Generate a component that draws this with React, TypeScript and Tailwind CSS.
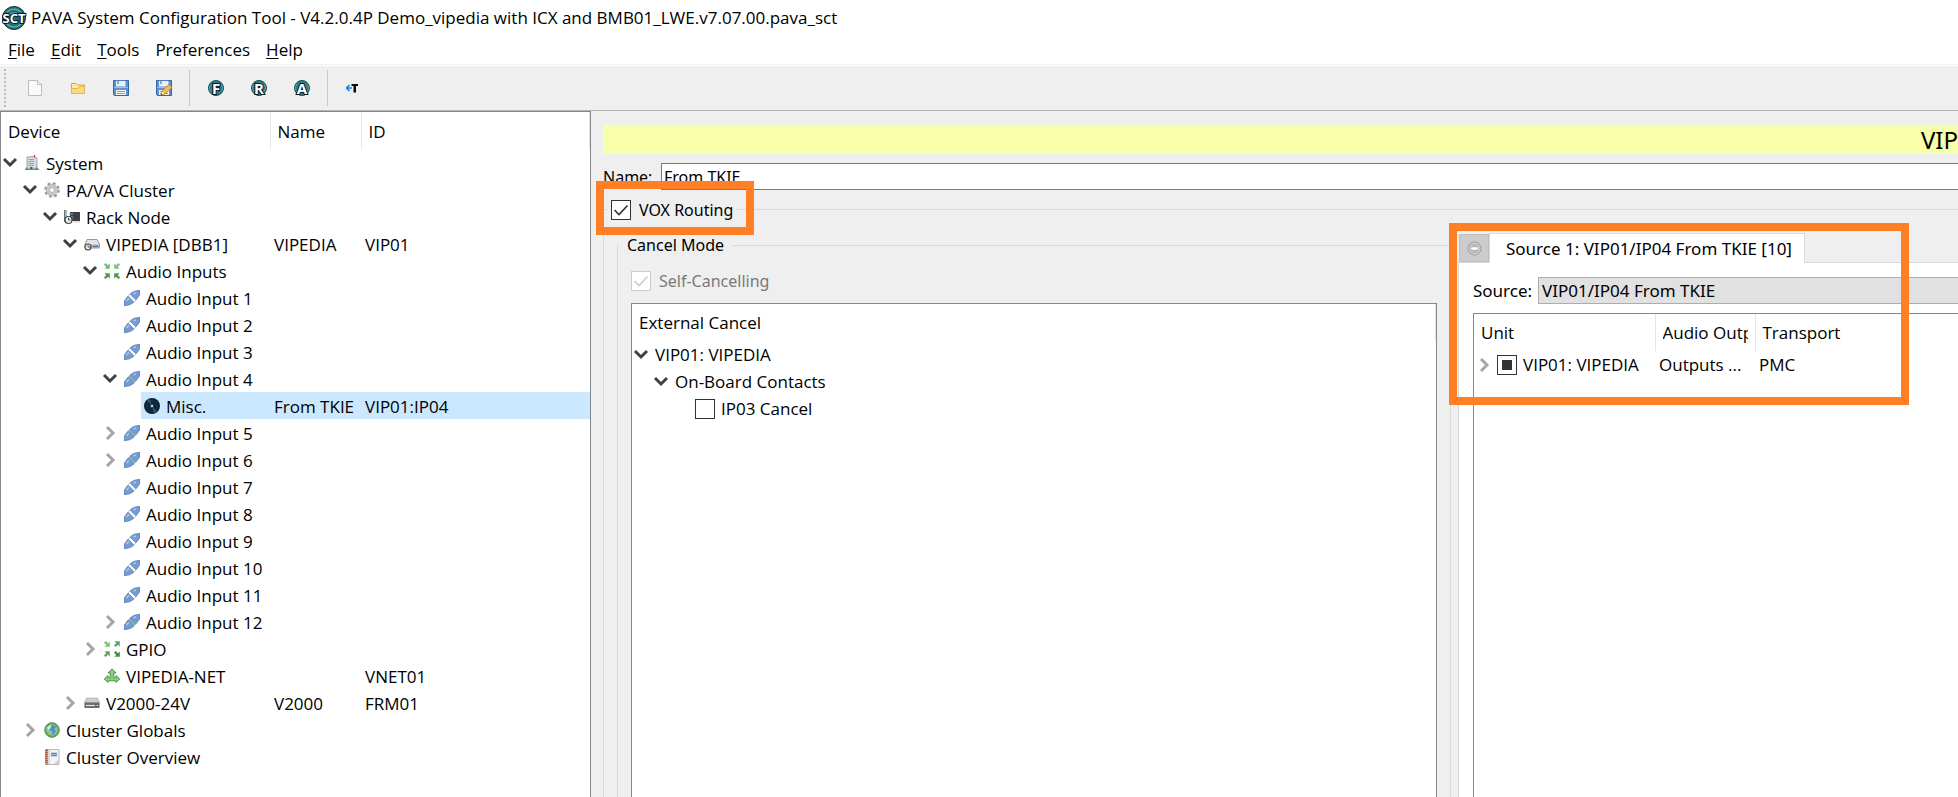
import React, { useState } from 'react';
import clsx from 'clsx';

type IconName =
    | 'building' | 'gear' | 'rack' | 'device' | 'inputs' | 'plug' | 'plugLinked'
    | 'disc' | 'gpio' | 'net' | 'unit' | 'globe' | 'notebook';

interface TreeRow {
    label: string;
    level: number;
    icon: IconName;
    open?: boolean;
    name?: string;
    id?: string;
}

const rows: TreeRow[] = [
    { label: 'System', level: 0, icon: 'building', open: true },
    { label: 'PA/VA Cluster', level: 1, icon: 'gear', open: true },
    { label: 'Rack Node', level: 2, icon: 'rack', open: true },
    { label: 'VIPEDIA [DBB1]', level: 3, icon: 'device', open: true, name: 'VIPEDIA', id: 'VIP01' },
    { label: 'Audio Inputs', level: 4, icon: 'inputs', open: true },
    { label: 'Audio Input 1', level: 5, icon: 'plug' },
    { label: 'Audio Input 2', level: 5, icon: 'plug' },
    { label: 'Audio Input 3', level: 5, icon: 'plug' },
    { label: 'Audio Input 4', level: 5, icon: 'plugLinked', open: true },
    { label: 'Misc.', level: 6, icon: 'disc', name: 'From TKIE', id: 'VIP01:IP04' },
    { label: 'Audio Input 5', level: 5, icon: 'plugLinked', open: false },
    { label: 'Audio Input 6', level: 5, icon: 'plugLinked', open: false },
    { label: 'Audio Input 7', level: 5, icon: 'plug' },
    { label: 'Audio Input 8', level: 5, icon: 'plug' },
    { label: 'Audio Input 9', level: 5, icon: 'plug' },
    { label: 'Audio Input 10', level: 5, icon: 'plug' },
    { label: 'Audio Input 11', level: 5, icon: 'plug' },
    { label: 'Audio Input 12', level: 5, icon: 'plugLinked', open: false },
    { label: 'GPIO', level: 4, icon: 'gpio', open: false },
    { label: 'VIPEDIA-NET', level: 4, icon: 'net', id: 'VNET01' },
    { label: 'V2000-24V', level: 3, icon: 'unit', open: false, name: 'V2000', id: 'FRM01' },
    { label: 'Cluster Globals', level: 1, icon: 'globe', open: false },
    { label: 'Cluster Overview', level: 1, icon: 'notebook' },
];

const menus = ['File', 'Edit', 'Tools', 'Preferences', 'Help'];

const SmallArrow: React.FC<{ x: number; y: number; rotate: number; color: string }> = ({ x, y, rotate, color }) => (
    <g transform={`translate(${x} ${y}) rotate(${rotate})`}>
        <path d="M-3 -1.500L-1.500 -3L1 -.8L2.800 -2.600V2.800H-2.600L-.8 1Z" fill={color} />
    </g>
);

const plugShape = (linked: boolean) => (
    <>
        <path d="M0 15.800L.6 10.500C1.800 9.800 2.200 7.500 4.500 5.800L10.300 11.500C8.500 13.800 6.500 14.200 5.500 14.800Z" fill="#739bd6" stroke="#4a70a8" strokeWidth=".7" />
        <path d="M16 .2L15.400 5.500C14.200 6.200 13.800 8.500 11.500 10.200L5.700 4.500C7.500 2.200 9.500 1.800 10.500 1.200Z" fill="#739bd6" stroke="#4a70a8" strokeWidth=".7" />
        <path d="M2.500 11L4.800 8.500M9.500 4L12 2.800" stroke="#b4cdf0" strokeWidth="1.300" />
        <path d="M5.200 5.200L10.800 10.800" stroke={linked ? '#7dbb7a' : '#ffffff'} strokeWidth={linked ? 1.2 : 2.2} />
        {!linked && <path d="M5 7L9 11" stroke="#a59e98" strokeWidth="1" />}
    </>
);

const icons: Record<IconName, React.ReactNode> = {
    building: (
        <>
            <path d="M3 2L10 1.500L13 3V14H3Z" fill="#d7dbe2" stroke="#8d939c" strokeWidth=".8" />
            <path d="M4.500 4.500H10M4.500 6.500H10M4.500 8.500H10M4.500 10.500H10" stroke="#7ea6d8" />
            <path d="M6 12H8.500V14.500H6Z" fill="#555b63" />
            <path d="M10.500 0V2.500" stroke="#d33" strokeWidth="1.200" />
            <path d="M1 14.500C2 11.500 4 12 4.500 14.500ZM10.500 14.500C11 11.500 14 12 15 14.500Z" fill="#4da64a" />
            <path d="M1 14.500H15" stroke="#5b9a58" />
        </>
    ),
    gear: (
        <>
            <circle cx="8" cy="8" r="6.500" fill="none" stroke="#9a9a9a" strokeWidth="2.600" strokeDasharray="2.700 2.400" />
            <circle cx="8" cy="8" r="4.300" fill="none" stroke="#c9c9c9" strokeWidth="3.400" />
            <circle cx="8" cy="8" r="5.700" fill="none" stroke="#a6a6a6" strokeWidth=".6" />
            <circle cx="8" cy="8" r="2.500" fill="#fff" stroke="#a0a0a0" strokeWidth=".8" />
        </>
    ),
    rack: (
        <>
            <path d="M0 1H3V13H0Z" fill="#a9b8c0" />
            <path d="M.5 1V13" stroke="#5c7480" />
            <path d="M6 3H16V12H6Z" fill="#3c4146" />
            <path d="M5 5H9M5 8H9M5 10H9" stroke="#8aa0ac" />
            <path d="M10 13H16" stroke="#c8c8c8" />
            <circle cx="4.500" cy="11" r="3.500" fill="#eee" stroke="#454545" strokeWidth="1.200" />
            <path d="M4.500 9V11H6.500" stroke="#444" fill="none" />
        </>
    ),
    device: (
        <>
            <path d="M3 3.500H13L15.500 8V12H1V8Z" fill="#e4e4e4" stroke="#8c8c8c" strokeWidth=".9" />
            <path d="M1 8.500H15.500V12H1Z" fill="#a8acb0" />
            <path d="M9 10.500H14" stroke="#3a78c0" />
            <circle cx="4" cy="11" r="3" fill="#eee" stroke="#454545" strokeWidth="1.100" />
            <path d="M4 9.500V11H6" stroke="#444" fill="none" strokeWidth=".9" />
        </>
    ),
    inputs: (
        <>
            <SmallArrow x={3} y={3} rotate={0} color="#6fc06b" />
            <SmallArrow x={13} y={3} rotate={90} color="#7cc478" />
            <SmallArrow x={13} y={13} rotate={180} color="#4b9a49" />
            <SmallArrow x={3} y={13} rotate={270} color="#4b9a49" />
        </>
    ),
    gpio: (
        <>
            <SmallArrow x={3} y={3} rotate={0} color="#7cc478" />
            <SmallArrow x={13} y={3} rotate={270} color="#5fa65b" />
            <SmallArrow x={13} y={13} rotate={0} color="#3f8d3d" />
            <SmallArrow x={3} y={13} rotate={270} color="#5fa65b" />
        </>
    ),
    plug: plugShape(false),
    plugLinked: plugShape(true),
    disc: (
        <>
            <circle cx="8" cy="8" r="8" fill="#0c2236" />
            <path d="M8 8L3 2.500A8 8 0 0 1 6 1ZM8 8L13 13.500A8 8 0 0 1 10 15Z" fill="#38536b" />
            <circle cx="8" cy="8" r="5" fill="none" stroke="#29435a" strokeWidth=".6" />
            <circle cx="8" cy="8" r="2.200" fill="#1d4c6e" />
            <circle cx="8" cy="8" r="1" fill="#fff" />
        </>
    ),
    net: (
        <path
            d="M8 .8L12 5H9.800V9.500H12V7.500L15.800 11L12 14.500V12.800H4V14.500L.2 11L4 7.500V9.500H6.200V5H4Z"
            fill="#86cf80" stroke="#3f8f3c" strokeWidth=".9" strokeLinejoin="round"
        />
    ),
    unit: (
        <>
            <path d="M2.500 3H13.500L15.500 8H.5Z" fill="#cfcfcf" stroke="#a0a0a0" strokeWidth=".6" />
            <path d="M.5 7.500H15.500V13H.5Z" fill="#6b6b6b" />
            <path d="M2 10.500H11" stroke="#e4e4e4" strokeWidth="1.200" />
            <path d="M12.500 10.500H14" stroke="#b8e0b0" strokeWidth="1.200" />
        </>
    ),
    globe: (
        <>
            <circle cx="8" cy="8" r="7.400" fill="#4fa04a" stroke="#8a9c88" strokeWidth="1" />
            <circle cx="8" cy="8" r="5.800" fill="#8cc886" />
            <path d="M8 3L12.500 4.500L10 7.500L12 9L9.500 12.500L8 13L8.500 9.500L5.500 8Z" fill="#4a8fd4" />
            <path d="M3 5.500L7 2.500L6.500 6L4 8Z" fill="#d3efcf" />
        </>
    ),
    notebook: (
        <>
            <path d="M2 .5H15V15.500H2Z" fill="#f4f4f2" stroke="#a8a8a8" strokeWidth=".8" />
            <path d="M2.500 .5V15.500" stroke="#a85a38" strokeWidth="2.800" strokeDasharray="1.400 .6" />
            <path d="M5 1V15" stroke="#c9a999" strokeWidth=".8" />
            <path d="M7 4.500H13M7 6.500H13" stroke="#4f84cc" strokeWidth="1.300" />
            <path d="M10 15L15 10V15Z" fill="#cfcfcf" />
        </>
    ),
};

const Chevron: React.FC<{ open: boolean }> = ({ open }) => (
    <svg viewBox="0 0 16 16" className="size-4 shrink-0" fill="none" strokeWidth="3">
        {open ? <path d="M2 4L8 10L14 4" stroke="#404040" /> : <path d="M5 2L11 8L5 14" stroke="#a6a6a6" />}
    </svg>
);

const TreeToggle: React.FC<{ open?: boolean; label: string }> = ({ open, label }) =>
    open === undefined ? (
        <span className="w-4 shrink-0" />
    ) : (
        <button type="button" aria-expanded={open} aria-label={label} className="shrink-0">
            <Chevron open={open} />
        </button>
    );

interface CheckBoxProps {
    id: string;
    checked?: boolean;
    partial?: boolean;
    disabled?: boolean;
    onChange?: () => void;
}

const CheckBox: React.FC<CheckBoxProps> = ({ id, checked = false, partial, disabled, onChange }) => (
    <span className="grid size-5 shrink-0">
        <input
            type="checkbox"
            id={id}
            checked={checked}
            disabled={disabled}
            onChange={onChange ?? (() => undefined)}
            className="col-start-1 row-start-1 size-5 appearance-none border border-[#333] bg-white disabled:border-[#ccc]"
        />
        {partial && <span className="pointer-events-none col-start-1 row-start-1 m-[5px] bg-[#333]" />}
        {checked && !partial && (
            <svg viewBox="0 0 20 20" className="pointer-events-none col-start-1 row-start-1 size-5" fill="none" stroke={disabled ? '#ccc' : '#333'} strokeWidth="1.600">
                <path d="M3.500 10L8 14.500L16.500 5.500" />
            </svg>
        )}
    </span>
);

const LetterIcon: React.FC<{ letter: string }> = ({ letter }) => (
    <svg viewBox="0 0 16 16" className="size-4 overflow-visible">
        <circle cx="8" cy="8" r="7.500" fill="#2a7f89" stroke="#1d4a52" />
        <path d="M3 4A6 6 0 0 0 3 12M13 4A6 6 0 0 1 13 12" stroke="#4fa3ab" fill="none" />
        <text x="8" y="13.500" textAnchor="middle" fontSize="15" fontWeight="700" fontFamily="Open Sans, sans-serif" fill="#fff" stroke="#0b1719" strokeWidth="2" paintOrder="stroke">{letter}</text>
    </svg>
);

const Floppy: React.FC<{ pencil?: boolean }> = ({ pencil }) => (
    <svg viewBox="0 0 16 16" className="size-4">
        <path d="M.5 .5H15.500V15.500H1.500L.5 14.500Z" fill="#5f90d6" stroke="#3465a4" />
        <path d="M3 .8H12.500V6.500H3Z" fill="#e6eefa" />
        <path d="M5 1V4" stroke="#3465a4" />
        <path d="M1 7.500H15" stroke="#9dbdea" />
        <path d="M3 10H13V15H3Z" fill="#f4f8f0" />
        <path d="M4 11.500H12M4 13.500H12" stroke="#7fb265" />
        {pencil && (
            <>
                <path d="M5 15L6 11L13 4.500L16 7.500L9 14Z" fill="#f0bd55" stroke="#b57c22" strokeWidth=".8" />
                <path d="M5 15L6 11.500L8.500 14Z" fill="#f6e3c8" />
                <path d="M5 15.200L5.500 13.500L6.800 14.600Z" fill="#333" />
            </>
        )}
    </svg>
);

const ToolButton: React.FC<{ label: string; children: React.ReactNode }> = ({ label, children }) => (
    <button type="button" aria-label={label} className="flex h-9 w-[43px] items-center justify-center">
        {children}
    </button>
);

const Toolbar: React.FC = () => (
    <div className="flex h-11 shrink-0 items-center bg-[#efefef]">
        <span className="ml-1 mr-[7px] h-[38px] border-l-2 border-dotted border-[#bdbdbd]" />
        <ToolButton label="New">
            <svg viewBox="0 0 16 16" className="size-4">
                <path d="M1.500 .5H10.500L14.500 4.500V15.500H1.500Z" fill="#fafafa" stroke="#bcbcbc" />
                <path d="M10.500 .5V4.500H14.500" fill="#eee" stroke="#bcbcbc" />
            </svg>
        </ToolButton>
        <ToolButton label="Open">
            <svg viewBox="0 0 16 16" className="size-4">
                <path d="M1.500 13.500V3.500H6L7.500 5H14.500V13.500Z" fill="#fbe9a8" stroke="#dba53a" />
                <path d="M1.500 13.500V8.500H8L9.500 6.500H14.500V13.500Z" fill="#fadc7c" stroke="#e6b558" />
            </svg>
        </ToolButton>
        <ToolButton label="Save"><Floppy /></ToolButton>
        <ToolButton label="Save As"><Floppy pencil /></ToolButton>
        <span className="mx-1 h-9 border-l border-[#c8c8c8]" />
        <ToolButton label="F"><LetterIcon letter="F" /></ToolButton>
        <ToolButton label="R"><LetterIcon letter="R" /></ToolButton>
        <ToolButton label="A"><LetterIcon letter="A" /></ToolButton>
        <span className="mx-1 h-9 border-l border-[#c8c8c8]" />
        <ToolButton label="T">
            <svg viewBox="0 0 16 16" className="size-4">
                <path d="M.5 8H6M3.500 5L.5 8L3.500 11" fill="none" stroke="#1481f5" strokeWidth="1.600" />
                <path d="M5.500 4H12V6H10V12.500H7.500V6H5.500Z" fill="#0a0a0a" />
            </svg>
        </ToolButton>
    </div>
);

const DeviceTree: React.FC = () => (
    <div className="w-[591px] shrink-0 overflow-hidden border border-b-0 border-[#828790] bg-white">
        <table className="w-full table-fixed border-collapse text-left whitespace-nowrap">
            <colgroup>
                <col className="w-[269px]" />
                <col className="w-[91px]" />
                <col />
            </colgroup>
            <thead>
                <tr className="h-[37px]">
                    <th className="border-r border-[#e5e5e5] px-[7px] pb-0 pt-[2px] font-normal">Device</th>
                    <th className="border-r border-[#e5e5e5] px-[7px] pb-0 pt-[2px] font-normal">Name</th>
                    <th className="border-r border-[#e5e5e5] px-[7px] pb-0 pt-[2px] font-normal">ID</th>
                </tr>
            </thead>
            <tbody>
                {rows.map((row) => {
                    const selected = row.label === 'Misc.';
                    return (
                        <tr key={row.label} className="h-[27px]">
                            <td className="p-0">
                                <div className="flex h-[27px]" style={{ paddingLeft: row.level * 20 }}>
                                    <span className="flex w-5 shrink-0 items-center pl-px">
                                        <TreeToggle open={row.open} label={row.label} />
                                    </span>
                                    <span className={clsx('flex min-w-0 flex-1 items-center gap-[6px] pl-[3px]', selected && 'bg-[#cce8ff]')}>
                                        <svg viewBox="0 0 16 16" className="size-4 shrink-0">{icons[row.icon]}</svg>
                                        <span className="pt-[2px]">{row.label}</span>
                                    </span>
                                </div>
                            </td>
                            <td className={clsx('pt-[2px] pr-0 pb-0 pl-1', selected && 'bg-[#cce8ff]')}>{row.name}</td>
                            <td className={clsx('pt-[2px] pr-0 pb-0 pl-1', selected && 'bg-[#cce8ff]')}>{row.id}</td>
                        </tr>
                    );
                })}
            </tbody>
        </table>
    </div>
);

const CancelMode: React.FC = () => (
    <fieldset className="-mb-4 flex min-w-0 flex-1 flex-col border border-[#d9d9d9] px-[13px]">
        <legend className="-ml-3 px-2 leading-[22px]">Cancel Mode</legend>
        <div className="flex h-full flex-col">
            <label htmlFor="self-cancelling" className="mt-[15px] flex h-5 items-center gap-2 text-[#7a7a7a]">
                <CheckBox id="self-cancelling" checked disabled />
                Self-Cancelling
            </label>
            <div className="mt-3 flex-1 border border-[#828790] bg-white font-['Open_Sans',sans-serif] text-[17px]">
                <div className="flex h-[37px] items-center border-r border-[#e5e5e5] px-[7px] pt-px">External Cancel</div>
                <ul>
                    <li className="flex h-[27px] items-center gap-[6px] pl-px">
                        <TreeToggle open label="VIP01: VIPEDIA" />
                        <span className="pt-px">VIP01: VIPEDIA</span>
                    </li>
                    <li className="flex h-[27px] items-center gap-[6px] pl-[21px]">
                        <TreeToggle open label="On-Board Contacts" />
                        <span className="pt-px">On-Board Contacts</span>
                    </li>
                    <li className="flex h-[27px] items-center pl-[63px]">
                        <CheckBox id="ip03" />
                        <label htmlFor="ip03" className="pl-[6px] pt-px">IP03 Cancel</label>
                    </li>
                </ul>
            </div>
        </div>
    </fieldset>
);

const SourcePane: React.FC = () => (
    <div className="relative flex w-[515px] shrink-0 flex-col pt-[10px] text-[17px]">
        <div className="flex items-end">
            <button type="button" aria-label="Remove source" className="ml-px flex h-7 w-[30px] items-center justify-center border border-[#bfbfbf] bg-[#cccccc]">
                <svg viewBox="0 0 16 16" className="size-[15px]">
                    <circle cx="8" cy="8" r="7" fill="#b9b9b9" stroke="#999" />
                    <circle cx="8" cy="8" r="5.800" fill="none" stroke="#d8d8d8" />
                    <path d="M4.500 8H11.500" stroke="#fff" strokeWidth="2.500" />
                </svg>
            </button>
            <button type="button" className="z-10 -mb-px h-[30px] border border-b-0 border-[#d9d9d9] bg-white pl-4 pr-3">
                Source 1: VIP01/IP04 From TKIE [10]
            </button>
        </div>
        <div className="-mb-4 flex flex-1 flex-col border border-[#d9d9d9] bg-white pl-[14px] pt-[14px]">
            <div className="flex h-[27px] items-center">
                <label htmlFor="source" className="w-[65px]">Source:</label>
                <select id="source" className="h-[27px] flex-1 appearance-none border border-[#adadad] bg-[#e1e1e1] px-[3px]">
                    <option>VIP01/IP04 From TKIE</option>
                </select>
            </div>
            <div className="mt-[9px] flex-1 border border-[#828790] font-['Open_Sans',sans-serif]">
                <table className="w-full table-fixed border-collapse text-left whitespace-nowrap">
                    <colgroup>
                        <col className="w-[181px]" />
                        <col className="w-[100px]" />
                        <col />
                    </colgroup>
                    <thead>
                        <tr className="h-[37px]">
                            <th className="border-r border-[#e5e5e5] px-[7px] pb-0 pt-px font-normal">Unit</th>
                            <th className="border-r border-[#e5e5e5] px-[7px] pb-0 pt-px font-normal"><div className="overflow-hidden">Audio Outp</div></th>
                            <th className="px-[7px] pb-0 pt-px font-normal">Transport</th>
                        </tr>
                    </thead>
                    <tbody>
                        <tr className="h-[27px]">
                            <td className="p-0">
                                <div className="flex items-center">
                                    <span className="flex w-[23px] pl-[2px]"><TreeToggle open={false} label="VIP01: VIPEDIA outputs" /></span>
                                    <CheckBox id="unit-vip01" checked partial />
                                    <label htmlFor="unit-vip01" className="pl-[6px]">VIP01: VIPEDIA</label>
                                </div>
                            </td>
                            <td className="py-0 pr-0 pl-1">Outputs ...</td>
                            <td className="py-0 pr-0 pl-1">PMC</td>
                        </tr>
                    </tbody>
                </table>
            </div>
        </div>
        <div className="pointer-events-none absolute top-0 -left-[9px] z-20 h-[182px] w-[460px] border-8 border-[#ff7f27]" />
    </div>
);

const EditorPanel: React.FC = () => {
    const [name, setName] = useState('From TKIE');
    const [vox, setVox] = useState(true);

    return (
        <main className="flex min-w-0 flex-1 flex-col overflow-hidden bg-[#efefef] pl-3 pt-[14px] font-['Noto_Sans',sans-serif] text-base leading-[22px]">
            <h1 className="h-[29px] overflow-hidden bg-[#f7ffab] text-right text-2xl leading-[29px]">VIP</h1>
            <div className="mt-[9px] flex h-[27px] items-center">
                <label htmlFor="name" className="w-[58px]">Name:</label>
                <input
                    id="name"
                    type="text"
                    value={name}
                    onChange={(e) => setName(e.target.value)}
                    className="-mr-4 h-[27px] flex-1 border border-[#7a7a7a] bg-white px-[2px]"
                />
            </div>
            <fieldset className="-mr-4 -mb-4 mt-[6px] min-h-0 min-w-0 flex-1 border border-[#d9d9d9] pl-[13px]">
                <legend className="relative -ml-[10px] px-1">
                    <span className="flex h-[27px] items-center gap-2">
                        <CheckBox id="vox" checked={vox} onChange={() => setVox(!vox)} />
                        <label htmlFor="vox">VOX Routing</label>
                    </span>
                    <span className="pointer-events-none absolute -left-[11px] top-[-15px] h-[54px] w-[158px] border-8 border-[#ff7f27]" />
                </legend>
                <div className="flex h-full">
                    <div className="flex min-w-0 flex-1 pt-[11px] pr-[7px]">
                        <CancelMode />
                    </div>
                    <div className="flex h-full">
                        <SourcePane />
                    </div>
                </div>
            </fieldset>
        </main>
    );
};

const App: React.FC = () => (
    <div className="flex h-screen flex-col overflow-hidden bg-white font-['Open_Sans',sans-serif] text-[17px] leading-[22px] text-black">
        <header className="flex h-9 shrink-0 items-center gap-[5px] pl-[2px]">
            <svg viewBox="0 0 24 24" className="size-6 overflow-visible">
                <circle cx="12" cy="12" r="11.500" fill="#236f78" stroke="#143238" />
                <path d="M5 6A10 10 0 0 1 19 6M7 9A7 7 0 0 1 17 9M5 18A10 10 0 0 0 19 18" stroke="#63b0b6" fill="none" strokeWidth="1.200" />
                <text x="12" y="17" textAnchor="middle" fontSize="13" fontWeight="700" fontFamily="Open Sans, sans-serif" fill="#fff" stroke="#0a1517" strokeWidth="2" paintOrder="stroke">SCT</text>
            </svg>
            <span>PAVA System Configuration Tool - V4.2.0.4P Demo_vipedia with ICX and BMB01_LWE.v7.07.00.pava_sct</span>
        </header>
        <nav className="flex h-7 shrink-0 items-center gap-4 pl-2">
            {menus.map((menu) => (
                <button key={menu} type="button">
                    {menu === 'Preferences' ? menu : <><u className="underline-offset-2">{menu[0]}</u>{menu.slice(1)}</>}
                </button>
            ))}
        </nav>
        <div className="h-[2px] shrink-0 border-t border-[#f0f0f0]" />
        <Toolbar />
        <div className="flex min-h-0 flex-1 border-t border-[#b5b5b5]">
            <DeviceTree />
            <EditorPanel />
        </div>
    </div>
);

export default App;
